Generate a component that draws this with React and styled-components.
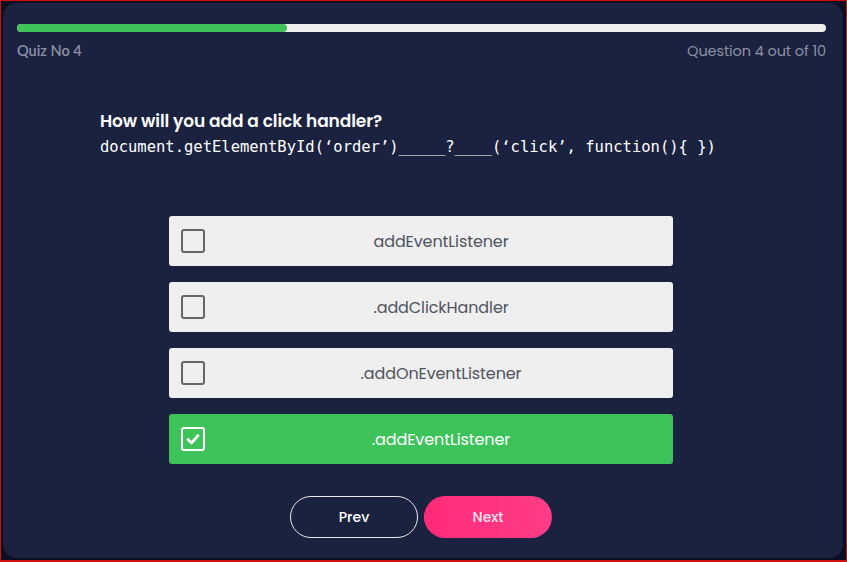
import React, { useState } from "react"
import styled, { createGlobalStyle } from "styled-components"

const GlobalStyle = createGlobalStyle`
  html, body {
    margin: 0;
    padding: 0;
    background: #0a0f24;
  }
  * {
    box-sizing: border-box;
  }
`

const Frame = styled.div`
  width: 847px;
  height: 562px;
  border: 1px solid #d01010;
  border-bottom-width: 2px;
  padding: 2px 3px 2px 2px;
  background: #0a0f24;
`

const Card = styled.div`
  height: 100%;
  background: #1a2240;
  border-radius: 14px;
  padding: 21px 17px 0 14px;
  display: flex;
  flex-direction: column;
  font-family: Poppins, "Noto Sans", Lato, sans-serif;
`

const Track = styled.div`
  height: 8px;
  border-radius: 4px;
  background: #eeeeee;
  overflow: hidden;
`

const Fill = styled.div`
  height: 100%;
  background: #3ec35a;
  border-radius: 4px;
`

const InfoRow = styled.div`
  display: flex;
  justify-content: space-between;
  margin-top: 9px;
  color: #8d91a3;
  font-size: 14.5px;
  line-height: 20px;
`

const QuizLabel = styled.span`
  font-family: Lato, sans-serif;
  font-weight: 600;
`

const CountLabel = styled.span`
  font-size: 14.5px;
  letter-spacing: -0.1px;
`

const Question = styled.div`
  margin: 48px 0 0 83px;
  color: #ffffff;
`

const Title = styled.h1`
  margin: 0;
  font-size: 17px;
  font-weight: 600;
  line-height: 24px;
  letter-spacing: -0.1px;
`

const Code = styled.div`
  margin-top: 3px;
  font-family: "DejaVu Sans Mono", "Liberation Mono", monospace;
  font-size: 15.5px;
  line-height: 22px;
  white-space: pre;
`

const Column = styled.div`
  width: 504px;
  margin-left: 152px;
`

const Options = styled(Column)`
  margin-top: 58px;
  display: flex;
  flex-direction: column;
  gap: 16px;
`

const Option = styled.div`
  height: 50px;
  border-radius: 3px;
  background: ${(p) => (p.selected ? "#3ec35a" : "#efefef")};
  display: flex;
  align-items: center;
  gap: 16px;
  padding: 0 12px;
  cursor: pointer;
`

const Box = styled.span`
  width: 24px;
  height: 24px;
  flex: none;
  border: 2.5px solid ${(p) => (p.selected ? "#ffffff" : "#666666")};
  border-radius: 3px;
  display: flex;
  align-items: center;
  justify-content: center;
`

const OptionText = styled.span`
  flex: 1;
  text-align: center;
  font-size: 16px;
  color: ${(p) => (p.selected ? "#ffffff" : "#50545f")};
  letter-spacing: -0.1px;
`

const Buttons = styled(Column)`
  display: flex;
  justify-content: center;
  gap: 6px;
  margin-top: 32px;
`

const Button = styled.button`
  width: 128px;
  height: 42px;
  border-radius: 21px;
  font-family: Poppins, "Noto Sans", Lato, sans-serif;
  font-size: 14px;
  font-weight: 500;
  color: ${(p) => (p.primary ? "#ffe4f0" : "#ffffff")};
  cursor: pointer;
  border: 1px solid ${(p) => (p.primary ? "transparent" : "#e8e8e8")};
  background: ${(p) =>
    p.primary ? "linear-gradient(90deg, #ff2a78, #ff3d86)" : "transparent"};
`

const options = [
  "addEventListener",
  ".addClickHandler",
  ".addOnEventListener",
  ".addEventListener",
]

const Check = () => (
  <svg width="16" height="16" viewBox="0 0 16 16">
    <path
      d="M3 8.5 L6.5 12 L13 4.5"
      fill="none"
      stroke="#ffffff"
      strokeWidth="2.8"
      strokeLinecap="round"
      strokeLinejoin="round"
    />
  </svg>
)

export default function App() {
  const [selected, setSelected] = useState(3)

  return (
    <>
      <GlobalStyle />
      <Frame>
        <Card>
          <Track>
            <Fill style={{ width: `${(4 / 12) * 100}%` }} />
          </Track>
          <InfoRow>
            <QuizLabel>Quiz No 4</QuizLabel>
            <CountLabel>Question 4 out of 10</CountLabel>
          </InfoRow>
          <Question>
            <Title>How will you add a click handler?</Title>
            <Code>document.getElementById(‘order’)_____?____(‘click’, function(){"{"} {"}"})</Code>
          </Question>
          <Options>
            {options.map((text, i) => (
              <Option
                key={i}
                selected={selected === i}
                onClick={() => setSelected(i)}
              >
                <Box selected={selected === i}>
                  {selected === i && <Check />}
                </Box>
                <OptionText selected={selected === i}>{text}</OptionText>
              </Option>
            ))}
          </Options>
          <Buttons>
            <Button>Prev</Button>
            <Button primary>Next</Button>
          </Buttons>
        </Card>
      </Frame>
    </>
  )
}
